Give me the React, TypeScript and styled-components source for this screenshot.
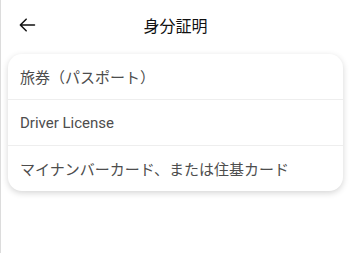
import styled, { createGlobalStyle } from "styled-components";

const GlobalStyle = createGlobalStyle`
  html, body {
    margin: 0;
    padding: 0;
    background: #ffffff;
  }
  body {
    font-family: Roboto, "Noto Sans CJK JP", sans-serif;
  }
`;

const Page = styled.div`
  min-height: 253px;
  border-left: 1px solid #dcdcdc;
  box-sizing: border-box;
  background: #fff;
`;

const Header = styled.header`
  position: relative;
  display: flex;
  align-items: center;
  justify-content: center;
  height: 50px;
`;

const BackButton = styled.button`
  position: absolute;
  left: 14px;
  top: 50%;
  transform: translateY(-50%);
  display: flex;
  align-items: center;
  justify-content: center;
  width: 24px;
  height: 24px;
  padding: 0;
  border: none;
  background: none;
  color: #111;
`;

const Title = styled.h1`
  margin: 0;
  font-size: 16px;
  font-weight: 400;
  color: #111;
  font-family: "Noto Sans CJK JP", sans-serif;
`;

const Card = styled.ul`
  list-style: none;
  margin: 4px 7px 0 7px;
  padding: 0;
  background: #fff;
  border-radius: 14px;
  box-shadow: 0 2px 6px rgba(0, 0, 0, 0.17);
  overflow: hidden;
`;

const Row = styled.li`
  display: flex;
  align-items: center;
  height: 45px;
  padding: 0 12px;
  font-size: 15px;
  color: #4d4d4d;
  font-family: Roboto, "Noto Sans CJK JP", sans-serif;
  & + & {
    border-top: 1px solid #eeeeee;
  }
`;

const items = [
  "旅券（パスポート）",
  "Driver License",
  "マイナンバーカード、または住基カード",
];

function App() {
  return (
    <>
      <GlobalStyle />
      <Page>
        <Header>
          <BackButton aria-label="戻る">
            <svg width="20" height="20" viewBox="0 0 24 24" fill="none">
              <path
                d="M21 12H4M11 5l-7 7 7 7"
                stroke="currentColor"
                strokeWidth="1.8"
                strokeLinecap="round"
                strokeLinejoin="round"
              />
            </svg>
          </BackButton>
          <Title>身分証明</Title>
        </Header>
        <Card>
          {items.map((label) => (
            <Row key={label}>{label}</Row>
          ))}
        </Card>
      </Page>
    </>
  );
}

export default App;
